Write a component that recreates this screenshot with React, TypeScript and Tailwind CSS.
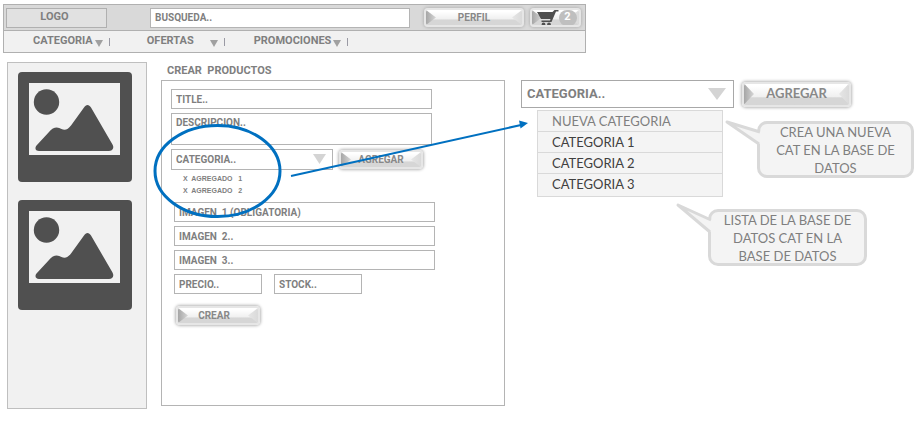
import { ReactNode } from "react";

const roboto = "font-['Roboto',Arial,sans-serif]";
const lato = "font-['Lato',Calibri,sans-serif]";
const field =
  "block border border-[#b4b4b4] bg-white px-1 text-[10px] font-bold leading-[14px] text-[#7f7f7f] placeholder:text-[#7f7f7f] placeholder:opacity-100";

function Triangle({ className }: { className: string }) {
  return (
    <svg viewBox="0 0 16 12" preserveAspectRatio="none" className={className} aria-hidden="true">
      <path d="M0 0H16L8 12Z" fill="currentColor" />
    </svg>
  );
}

function BevelButton({ className, label, children }: { className: string; label?: string; children: ReactNode }) {
  return (
    <button
      type="button"
      aria-label={label}
      className={`relative flex items-center justify-center overflow-hidden rounded-sm border-2 border-[#e6e6e6] bg-linear-to-b from-white from-10% via-[#f0f0f0] via-60% to-[#d6d6d6] to-66% font-bold text-[#888888] shadow-[0_0_3px_1px_#b8b8b8] ${className}`}
    >
      <span className="absolute inset-y-0 left-0 w-2.5 bg-linear-to-r from-[#a6a6a6] to-[#d6d6d6] [clip-path:polygon(0_0,100%_50%,0_100%)]" />
      <span className="absolute inset-y-0 right-0 w-2.5 bg-linear-to-r from-[#e6e6e6] to-[#dadada] [clip-path:polygon(100%_0,0_50%,100%_100%)]" />
      <span className="relative flex items-center">{children}</span>
    </button>
  );
}

function NavItem({ label, className, gap }: { label: string; className: string; gap: string }) {
  return (
    <li className={`flex items-center ${className}`}>
      <button type="button" className={`flex items-center font-bold ${gap}`}>
        {label}
        <Triangle className="mt-1 h-[7px] w-2 text-[#a0a0a0]" />
      </button>
      <span className="ml-1.5 h-2 w-px bg-[#9a9aa4]" />
    </li>
  );
}

function Picture() {
  return (
    <svg viewBox="0 0 114 110" className="block w-full" role="img" aria-label="Imagen">
      <rect width="114" height="110" rx="4" fill="#505050" />
      <rect x="11" y="11" width="91" height="72" fill="#f1f1f1" />
      <circle cx="28.5" cy="30" r="12.7" fill="#505050" />
      <path
        d="M21 79C17.500 79 16.500 76 18.500 73.500L31 60C35 55 39.500 54.500 43.500 57C47 58.500 50 57.500 53 53.500L66 35.500C68 32 71 32 73 35.500L94.500 72.500C96.500 76 94.500 79 91 79Z"
        fill="#505050"
      />
    </svg>
  );
}

function Bubble({ className, tip, children }: { className: string; tip: number; children: ReactNode }) {
  return (
    <div
      className={`relative flex h-[57px] items-center justify-center rounded-[10px] border-3 border-[#d9d9d9] bg-[#f4f4f4] text-center text-[13px] leading-[18px] text-[#7f7f7f] ${className}`}
    >
      <p>{children}</p>
      <svg
        viewBox="0 0 38 28"
        className="absolute -left-[35px] -top-[3px] h-7 w-[38px] overflow-visible"
        aria-hidden="true"
      >
        <path d={`M38 11L35 11L3 ${tip}L35 23L38 25Z`} fill="#f4f4f4" />
        <path d={`M35 11L2 ${tip}L34 23`} fill="none" stroke="#d9d9d9" strokeWidth="3" strokeLinejoin="round" />
      </svg>
    </div>
  );
}

export default function App() {
  return (
    <div className={`min-h-screen overflow-hidden bg-white pl-[3px] pt-1 text-[#7f7f7f] ${roboto}`}>
      <header className="w-full max-w-[583px] border border-[#b0b0b0] bg-[#f1f1f1] text-[11px]">
        <div className="flex h-[26px] items-center border-b border-[#b0b0b0] bg-[#d9d9d9] pl-0.5 pr-1">
          <div className="flex h-5 w-[101px] items-center justify-center border border-[#b0b0b0] bg-[#e1e1e1] pr-1 font-bold">
            LOGO
          </div>
          <input
            aria-label="Busqueda"
            placeholder="BUSQUEDA.."
            className={`ml-[43px] h-5 min-w-0 flex-1 ${field}`}
          />
          <BevelButton className="ml-3.5 h-[19px] w-[100px] text-[10px]">PERFIL</BevelButton>
          <BevelButton label="Carrito" className="ml-1.5 h-[19px] w-[51px] pl-0.5 text-[11px]">
            <svg viewBox="0 0 22 18" className="h-[18px] w-[22px]" aria-hidden="true">
              <path d="M0 3H15.500L17.500 1H21.500V2.500H19L14.500 13H4.500V11.500H13L13.500 10H4Z" fill="#505050" />
              <circle cx="6.500" cy="15.500" r="1.900" fill="#505050" />
              <circle cx="12" cy="15.500" r="1.900" fill="#505050" />
            </svg>
            <span className="flex h-4 w-[18px] items-center justify-center rounded-full bg-[#bfbfbf] text-white">2</span>
          </BevelButton>
        </div>
        <nav aria-label="Principal">
          <ul className="flex h-[21px] items-center text-[11px]">
            <NavItem label="CATEGORIA" className="ml-[29px]" gap="gap-0.5" />
            <NavItem label="OFERTAS" className="ml-[37px]" gap="gap-4" />
            <NavItem label="PROMOCIONES" className="ml-[29px]" gap="gap-0.5" />
          </ul>
        </nav>
      </header>

      <main className="flex items-start pl-1 pt-[9px]">
        <aside className="flex h-[347px] w-[140px] shrink-0 flex-col gap-[18px] border border-[#bfbfbf] bg-[#f1f1f1] pl-2.5 pr-3.5 pt-[9px]">
          <Picture />
          <Picture />
        </aside>

        <section className="relative ml-3.5 w-[344px] shrink-0">
          <h1 className="h-[18px] whitespace-pre pl-1.5 pt-0.5 text-[11px] font-bold leading-[14px]">CREAR  PRODUCTOS</h1>
          <form className="h-[326px] border border-[#b4b4b4] pl-[9px] pt-2">
            <input aria-label="Title" placeholder="TITLE.." className={`h-5 w-[261px] ${field}`} />
            <textarea
              aria-label="Descripcion"
              placeholder="DESCRIPCION.."
              className={`mt-1 h-8 w-[261px] resize-none pt-0.5 ${field}`}
            />
            <div className="mt-1 flex items-center gap-1.5">
              <div className="relative">
                <select aria-label="Categoria" className={`h-[21px] w-[162px] appearance-none ${field}`}>
                  <option>CATEGORIA..</option>
                </select>
                <Triangle className="pointer-events-none absolute right-[7px] top-[5px] h-2.5 w-[13px] text-[#d4d4d4]" />
              </div>
              <BevelButton className="h-[19px] w-[84px] text-[10px]">AGREGAR</BevelButton>
            </div>
            <ul className="whitespace-pre pl-3 pt-[3px] font-['Liberation_Sans',Arial,sans-serif] text-[7px] font-bold leading-3">
              <li>X  AGREGADO   1</li>
              <li>X  AGREGADO   2</li>
            </ul>
            <div className="mt-[5px] flex flex-col gap-1 pl-[3px]">
              <input aria-label="Imagen 1" placeholder="IMAGEN  1 (OBLIGATORIA)" className={`h-5 w-[261px] ${field}`} />
              <input aria-label="Imagen 2" placeholder="IMAGEN  2.." className={`h-5 w-[261px] ${field}`} />
              <input aria-label="Imagen 3" placeholder="IMAGEN  3.." className={`h-5 w-[261px] ${field}`} />
              <div className="flex gap-3">
                <input aria-label="Precio" placeholder="PRECIO.." className={`h-5 w-[88px] ${field}`} />
                <input aria-label="Stock" placeholder="STOCK.." className={`h-5 w-[88px] ${field}`} />
              </div>
            </div>
            <BevelButton className="ml-[5px] mt-3 h-[19px] w-[84px] pr-2 text-[10px]">CREAR</BevelButton>
          </form>
          <svg
            viewBox="0 0 376 100"
            className="pointer-events-none absolute -left-2 top-[61px] h-[100px] w-[376px] overflow-visible"
            aria-hidden="true"
          >
            <ellipse cx="64.500" cy="48" rx="62.500" ry="45.500" fill="none" stroke="#0070c0" strokeWidth="3" />
            <path d="M138 53L368 2" stroke="#0070c0" strokeWidth="2" />
            <path d="M375 0L366 -2.500L367.500 5.500Z" fill="#0070c0" />
          </svg>
        </section>

        <section aria-label="Categorias" className={`min-w-0 flex-1 pl-4 pt-[18px] ${lato}`}>
          <div className="flex items-center gap-2">
            <div className="relative">
              <select
                aria-label="Lista de categorias"
                className={`block h-7 w-[213px] appearance-none border border-[#a8a8a8] bg-white px-[5px] text-[13px] font-bold text-[#7f7f7f] ${roboto}`}
              >
                <option>CATEGORIA..</option>
              </select>
              <Triangle className="pointer-events-none absolute right-2 top-2 h-3 w-[18px] text-[#d4d4d4]" />
            </div>
            <BevelButton className="h-[25px] w-[109px] text-[13px]">AGREGAR</BevelButton>
          </div>
          <div className="flex items-start pl-4 pt-0.5">
            <ul className="w-[186px] shrink-0 border border-[#d9d9d9] bg-[#f4f4f4] text-[13px] leading-5 text-[#404040]">
              <li className="border-b border-[#d9d9d9] pl-3.5 text-[#7f7f7f]">NUEVA CATEGORIA</li>
              <li className="border-b border-[#d9d9d9] pl-3.5">CATEGORIA 1</li>
              <li className="border-b border-[#d9d9d9] pl-3.5">CATEGORIA 2</li>
              <li className="pb-0.5 pl-3.5">CATEGORIA 3</li>
            </ul>
            <Bubble className="ml-[34px] mt-[11px] w-[157px] shrink-0" tip={1}>
              CREA UNA NUEVA
              <br />
              CAT EN LA BASE DE
              <br />
              DATOS
            </Bubble>
          </div>
          <Bubble className="ml-[187px] mt-3 w-[159px]" tip={-4}>
            LISTA DE LA BASE DE
            <br />
            DATOS CAT EN LA
            <br />
            BASE DE DATOS
          </Bubble>
        </section>
      </main>
    </div>
  );
}
